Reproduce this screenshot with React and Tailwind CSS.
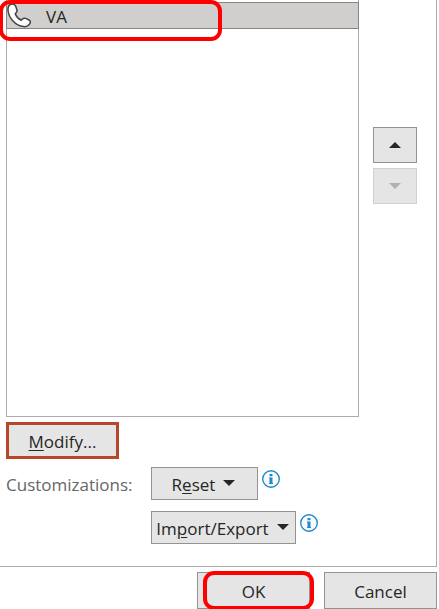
import React, { useState } from "react";

const commands = [{ id: "va", name: "VA" }];

const buttonBase =
  "flex items-center justify-center border bg-[#e5e5e5] text-[#262626]";

function PhoneIcon() {
  return (
    <svg width="25" height="25" viewBox="0 0 25 25" aria-hidden="true">
      <path
        d="M3.200 1.600C1.500 2.500.8 4.600 1 7.200 1.700 15 8.500 22.600 16.400 23.600c2.300.3 4.300-.3 5.600-1.800.8-.9 1.400-1.700 1.400-2.700 0-1.100-.7-1.900-1.800-2.400l-3-1.300c-1.300-.5-2.300-.3-3.200.6l-1.200 1.300C11.400 16 9.300 13.700 8.200 10.800l1-1.100c.8-.9 1-1.900.6-3.100L8.700 3.200C8 1.200 5.400.4 3.200 1.600Z"
        fill="#fff"
        stroke="#444"
        strokeWidth="1.500"
        strokeLinejoin="round"
      />
    </svg>
  );
}

function InfoIcon() {
  return (
    <svg width="18" height="18" viewBox="0 0 18 18" aria-hidden="true">
      <circle cx="9" cy="9" r="8.3" fill="#fafafa" stroke="#1e8bcd" strokeWidth="1.400" />
      <path d="M7.500 4h3v2.200h-3zM7 7.500h3.500V13H11v1H7v-1h.5V8.500H7z" fill="#1e8bcd" />
    </svg>
  );
}

function Arrow({ up = false }) {
  return (
    <svg width="12" height="6" viewBox="0 0 12 6" fill="currentColor" aria-hidden="true">
      <path d={up ? "M0 6 6 0 12 6Z" : "M0 0 6 6 12 0Z"} />
    </svg>
  );
}

function MenuRow({ children, info }) {
  return (
    <div className="flex items-start gap-1">
      <button
        type="button"
        className={`${buttonBase} h-[33px] gap-2 border-[#939393] pr-[6px] pb-px pl-1 ${
          info === "Import/Export" ? "w-[145px]" : "w-[107px]"
        }`}
      >
        <span className="pt-[3px]">{children}</span>
        <Arrow />
      </button>
      <button type="button" aria-label={`About ${info}`} className="mt-[3px]">
        <InfoIcon />
      </button>
    </div>
  );
}

export default function App() {
  const [selected, setSelected] = useState("va");

  return (
    <div className="overflow-hidden bg-white font-['Open_Sans','Noto_Sans',sans-serif] text-[17px] leading-6 text-[#262626]">
      <main className="mr-[2px] border-r border-b border-[#ababab] pb-[22px] pl-[6px]">
        <div className="flex gap-[14px] pr-[19px]">
          <ul
            role="listbox"
            aria-label="Commands"
            className="h-[417px] flex-1 border-x border-b border-[#ababab] pt-[2px]"
          >
            {commands.map((command) => (
              <li
                key={command.id}
                role="option"
                aria-selected={selected === command.id}
                onClick={() => setSelected(command.id)}
                className="relative -mx-px flex h-[27px] items-center gap-[14px] border border-[#868686] bg-[#d0cfcd]"
              >
                <PhoneIcon />
                <span className="pt-[2px]">{command.name}</span>
                <span className="pointer-events-none absolute -top-[3px] -left-[8px] h-[41px] w-[223px] rounded-[11px] border-4 border-[#ff0000]" />
              </li>
            ))}
          </ul>
          <div className="flex flex-col gap-[5px] pt-[127px]">
            <button
              type="button"
              aria-label="Move up"
              className={`${buttonBase} h-9 w-11 border-[#939393]`}
            >
              <Arrow up />
            </button>
            <button
              type="button"
              aria-label="Move down"
              disabled
              className="flex h-9 w-11 items-center justify-center border border-[#d0d0d0] bg-[#e5e5e5] text-[#b1b1b1]"
            >
              <Arrow />
            </button>
          </div>
        </div>

        <button
          type="button"
          className="mt-[5px] flex h-[37px] w-[113px] items-center justify-center border-3 border-[#b7472a] bg-[#e5e5e5] pt-[2px]"
        >
          <span>
            <u className="underline-offset-2">M</u>odify...
          </span>
        </button>

        <div className="mt-2 flex">
          <span className="w-[145px] pt-[6px] text-[#666]">Customizations:</span>
          <div className="flex flex-col gap-[11px]">
            <MenuRow info="Reset">
              R<u className="underline-offset-2">e</u>set
            </MenuRow>
            <MenuRow info="Import/Export">
              Im<u className="underline-offset-2">p</u>ort/Export
            </MenuRow>
          </div>
        </div>
      </main>

      <footer className="mt-[5px] mr-[2px] flex justify-end gap-[14px]">
        <button
          type="button"
          className={`${buttonBase} relative h-[37px] w-[113px] border-[#939393] pt-[2px]`}
        >
          OK
          <span className="pointer-events-none absolute -top-[2px] -right-[5px] -bottom-[2px] left-[5px] rounded-[11px] border-4 border-[#ff0000]" />
        </button>
        <button
          type="button"
          className={`${buttonBase} h-[37px] w-[113px] border-[#939393] pt-[2px]`}
        >
          Cancel
        </button>
      </footer>
    </div>
  );
}
